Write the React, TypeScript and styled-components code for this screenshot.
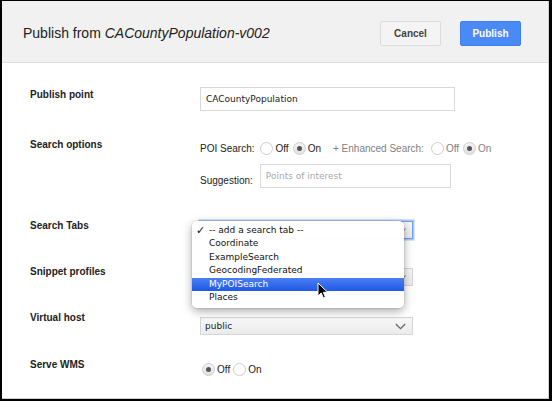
import React from "react";
import styled, { createGlobalStyle } from "styled-components";

const Global = createGlobalStyle`
  html, body { margin: 0; padding: 0; background: #fff; }
  * { box-sizing: border-box; }
`;

const Frame = styled.div`
  width: 552px;
  height: 401px;
  border-style: solid;
  border-color: #000;
  border-width: 1px 3px 2px 2px;
  background: #fff;
  font-family: "Liberation Sans", Arial, sans-serif;
  color: #222;
  overflow: hidden;
`;

const Dialog = styled.div`
  height: 100%;
  border-right: 1px solid #cfcfcf;
  border-bottom: 1px solid #cfcfcf;
  display: flex;
  flex-direction: column;
`;

const Header = styled.div`
  height: 62px;
  flex: none;
  background: #f1f1f1;
  border-bottom: 1px solid #dcdcdc;
  display: flex;
  align-items: center;
  padding: 3px 27px 0 21px;
`;

const Title = styled.div`
  flex: 1;
  font-size: 14px;
  color: #222;
  em { font-style: italic; }
`;

const Button = styled.button<{ $primary?: boolean }>`
  width: 61px;
  height: 25px;
  margin-left: 19px;
  border-radius: 2px;
  font-family: "Liberation Sans", Arial, sans-serif;
  font-weight: bold;
  font-size: 10px;
  cursor: default;
  border: 1px solid ${(p) => (p.$primary ? "#3b7ff0" : "#dcdcdc")};
  background: ${(p) => (p.$primary ? "#4a8af4" : "#f4f4f4")};
  color: ${(p) => (p.$primary ? "#fff" : "#444")};
  padding: 0;
`;

const Body = styled.div`
  padding-left: 28px;
`;

const Row = styled.div<{ $top: number }>`
  display: grid;
  grid-template-columns: 170px 1fr;
  align-items: start;
  margin-top: ${(p) => p.$top}px;
`;

const Label = styled.div<{ $pad?: number }>`
  font-weight: bold;
  font-size: 10px;
  line-height: 12px;
  color: #222;
  padding-top: ${(p) => p.$pad ?? 0}px;
`;

const Control = styled.div<{ $pad?: number }>`
  padding-top: ${(p) => p.$pad ?? 0}px;
  display: flex;
  flex-direction: column;
`;

const TextInput = styled.div<{ $width: number; $placeholder?: boolean }>`
  width: ${(p) => p.$width}px;
  height: 24px;
  border: 1px solid #d9d9d9;
  background: #fff;
  display: flex;
  align-items: center;
  padding-left: 5px;
  font-family: "DejaVu Sans", sans-serif;
  font-size: 9px;
  color: ${(p) => (p.$placeholder ? "#a8a8a8" : "#222")};
`;

const Line = styled.div<{ $gap?: number }>`
  display: flex;
  align-items: center;
  height: 16px;
  margin-top: ${(p) => p.$gap ?? 0}px;
  font-size: 10px;
  white-space: nowrap;
`;

const Text = styled.span<{ $muted?: boolean; $ml?: number }>`
  color: ${(p) => (p.$muted ? "#808080" : "#222")};
  margin-left: ${(p) => p.$ml ?? 0}px;
  font-size: 10px;
`;

const Radio = styled.span<{ $checked?: boolean; $ml?: number }>`
  width: 13px;
  height: 13px;
  border-radius: 50%;
  margin-left: ${(p) => p.$ml ?? 0}px;
  margin-right: 2px;
  border: 1px solid #cdcdcd;
  background: ${(p) => (p.$checked ? "linear-gradient(#f4f4f4, #e2e2e2)" : "#fff")};
  display: inline-flex;
  align-items: center;
  justify-content: center;
  flex: none;
  &::after {
    content: "";
    display: ${(p) => (p.$checked ? "block" : "none")};
    width: 5px;
    height: 5px;
    border-radius: 50%;
    background: #555;
  }
`;

const SuggestRow = styled.div`
  display: flex;
  align-items: center;
  margin-top: 8px;
  gap: 7px;
`;

const SuggestLabel = styled.span`
  font-size: 10px;
  color: #222;
  padding-top: 9px;
`;

const SelectWrap = styled.div`
  position: relative;
  width: 213px;
`;

const Select = styled.div<{ $focus?: boolean }>`
  width: 213px;
  height: 18px;
  border: 1px solid ${(p) => (p.$focus ? "#6d9eeb" : "#d6d6d6")};
  box-shadow: ${(p) => (p.$focus ? "0 0 0 1.5px rgba(109,158,235,0.55)" : "none")};
  background: linear-gradient(#f7f7f7, #ebebeb);
  display: flex;
  align-items: center;
  justify-content: space-between;
  padding: 0 6px 0 4px;
  font-family: "DejaVu Sans", sans-serif;
  font-size: 9px;
  color: #222;
`;

const Menu = styled.div`
  position: absolute;
  left: -8px;
  top: 0;
  width: 212px;
  padding: 3px 0 4px;
  background: rgba(255, 255, 255, 0.98);
  border-radius: 5px;
  box-shadow: 0 3px 10px rgba(0, 0, 0, 0.35), 0 0 0 0.5px rgba(0, 0, 0, 0.12);
  font-family: "DejaVu Sans", sans-serif;
  font-size: 9px;
  z-index: 5;
`;

const Item = styled.div<{ $active?: boolean }>`
  position: relative;
  height: 13.4px;
  line-height: 13.4px;
  padding-left: 17px;
  color: ${(p) => (p.$active ? "#fff" : "#111")};
  background: ${(p) => (p.$active ? "linear-gradient(#4a7ff2, #2058e8)" : "transparent")};
`;

const Check = styled.span`
  position: absolute;
  left: 4px;
  top: 0;
  font-size: 11px;
  font-weight: bold;
`;

const Cursor = styled.svg`
  position: absolute;
  left: 125px;
  top: 61px;
  z-index: 6;
`;

const Chevron = ({ small }: { small?: boolean }) =>
  small ? (
    <svg width="6" height="6" viewBox="0 0 6 6">
      <path d="M0.5 1.5 L3 4.5 L5.5 1.5" fill="none" stroke="#888" strokeWidth="1.1" />
    </svg>
  ) : (
    <svg width="11" height="7" viewBox="0 0 11 7">
      <path d="M0.8 1 L5.5 5.6 L10.2 1" fill="none" stroke="#666" strokeWidth="1.3" />
    </svg>
  );

const items = ["Coordinate", "ExampleSearch", "GeocodingFederated", "MyPOISearch", "Places"];

export default function App() {
  return (
    <Frame>
      <Global />
      <Dialog>
        <Header>
          <Title>
            Publish from <em>CACountyPopulation-v002</em>
          </Title>
          <Button>Cancel</Button>
          <Button $primary>Publish</Button>
        </Header>
        <Body>
          <Row $top={24}>
            <Label $pad={2}>Publish point</Label>
            <Control>
              <TextInput $width={255}>CACountyPopulation</TextInput>
            </Control>
          </Row>
          <Row $top={28}>
            <Label>Search options</Label>
            <Control $pad={1}>
              <Line>
                <Text>POI Search:</Text>
                <Radio $ml={6} />
                <Text>Off</Text>
                <Radio $ml={4} $checked />
                <Text>On</Text>
                <Text $muted $ml={12}>+ Enhanced Search:</Text>
                <Radio $ml={7} />
                <Text $muted>Off</Text>
                <Radio $ml={4} $checked />
                <Text $muted>On</Text>
              </Line>
              <SuggestRow>
                <SuggestLabel>Suggestion:</SuggestLabel>
                <TextInput $width={191} $placeholder>Points of interest</TextInput>
              </SuggestRow>
            </Control>
          </Row>
          <Row $top={31}>
            <Label $pad={1}>Search Tabs</Label>
            <Control $pad={2}>
              <SelectWrap>
                <Select $focus>
                  <span />
                  <Chevron small />
                </Select>
                <Menu>
                  <Item>
                    <Check>✓</Check>-- add a search tab --
                  </Item>
                  {items.map((it) => (
                    <Item key={it} $active={it === "MyPOISearch"}>
                      {it}
                    </Item>
                  ))}
                  <Cursor width="12" height="17" viewBox="0 0 12 17">
                    <path
                      d="M1 1 L1 14 L4.2 11 L6.4 16 L8.4 15.1 L6.3 10.3 L10.6 10.3 Z"
                      fill="#000"
                      stroke="#fff"
                      strokeWidth="1"
                      strokeLinejoin="round"
                    />
                  </Cursor>
                </Menu>
              </SelectWrap>
            </Control>
          </Row>
          <Row $top={27}>
            <Label>Snippet profiles</Label>
            <Control $pad={2}>
              <Select>
                <span />
                <Chevron small />
              </Select>
            </Control>
          </Row>
          <Row $top={26}>
            <Label>Virtual host</Label>
            <Control $pad={5}>
              <Select>
                <span>public</span>
                <Chevron />
              </Select>
            </Control>
          </Row>
          <Row $top={24}>
            <Label>Serve WMS</Label>
            <Control $pad={2}>
              <Line>
                <Radio $ml={2} $checked />
                <Text>Off</Text>
                <Radio $ml={3} />
                <Text>On</Text>
              </Line>
            </Control>
          </Row>
        </Body>
      </Dialog>
    </Frame>
  );
}
